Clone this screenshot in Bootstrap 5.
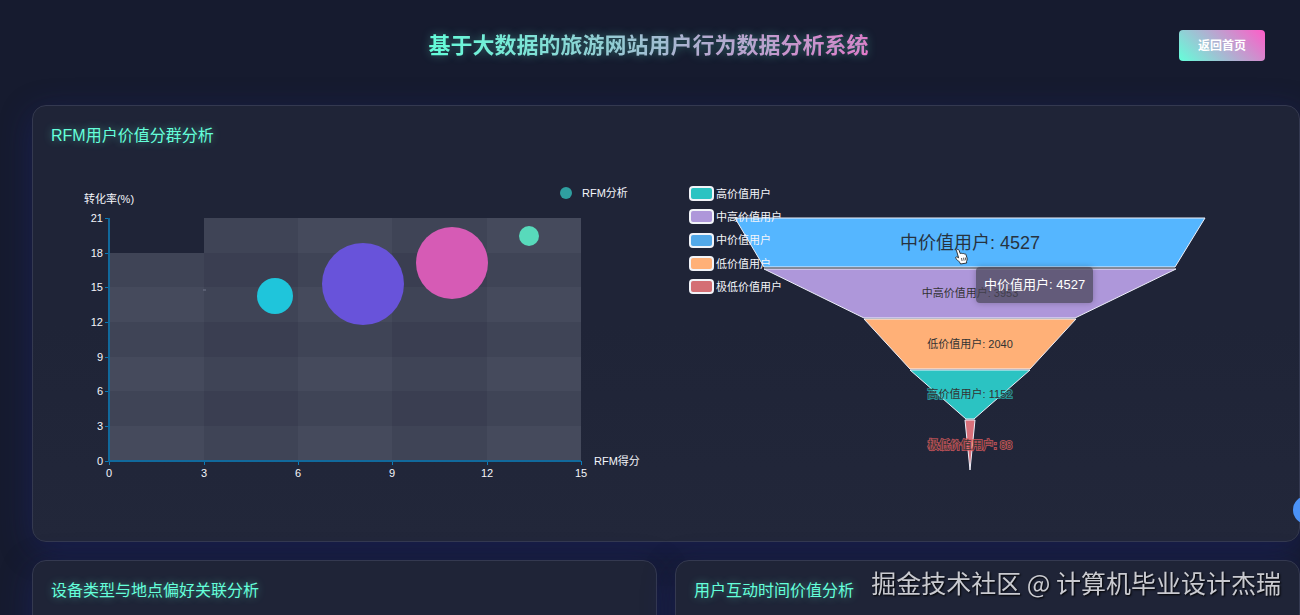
<!DOCTYPE html>
<html lang="zh-CN">
<head>
<meta charset="utf-8">
<meta name="viewport" content="width=device-width, initial-scale=1">
<title>基于大数据的旅游网站用户行为数据分析系统</title>
<link href="https://cdn.jsdelivr.net/npm/bootstrap@5.3.0/dist/css/bootstrap.min.css" rel="stylesheet">
<style>
  body { background: #161b2f; color: #fff; font-family: "Liberation Sans", "Noto Sans CJK SC", sans-serif; }
  .topbar { display: grid; grid-template-columns: 1fr auto 1fr; align-items: center; padding: 30px 35px 44px 32px; }
  .site-title { grid-column: 2; font-size: 22px; line-height: 30px; font-weight: 600; color: transparent;
    background: linear-gradient(90deg, #64ffda, #f06bc8); background-clip: text; -webkit-background-clip: text;
    text-shadow: 0 0 10px rgba(100, 255, 218, .35); }
  .btn-home { justify-self: end; width: 86px; height: 31px; padding: 0; border: 0; border-radius: 4px; font-size: 12px; font-weight: 600;
    color: #fff; background: linear-gradient(45deg, #64ffda, #ff5cc8); }
  .btn-home:hover { color: #fff; }
  .board { padding-left: 32px; gap: 18px; }
  .split { display: grid; grid-template-columns: 1fr 1fr; gap: 18px; }
  .panel { background: #1f2437; border: 1px solid #343950; border-radius: 14px; padding: 18px; box-shadow: 0 8px 32px rgba(31, 38, 135, .37); }
  .panel-tall { background: linear-gradient(#1f2437 50%, #22273a); }
  .panel-low { min-height: 437px; }
  .panel-title { font-size: 16px; line-height: 24px; margin: 0 0 12px; font-weight: 400; color: #64ffda; text-shadow: 0 0 8px rgba(100, 255, 218, .45); }
  .chart { width: 100%; overflow: visible; }
  .chart text { font-size: 11px; fill: #f4f5fa; }
  .chart .name { font-size: 11px; fill: #333; }
  .chart .name-active { font-size: 18px; fill: #27333f; }
  .axis { stroke: #0c7bb8; fill: none; shape-rendering: crispEdges; }
  .axis-line { stroke: #11699c; stroke-width: 2; fill: none; shape-rendering: crispEdges; }
  .tip { left: 301px; top: 107px; padding: 8px; font-size: 13px; line-height: 20px; white-space: nowrap; border-radius: 4px;
    background: rgba(70, 68, 85, .72); box-shadow: 0 0 6px rgba(0, 0, 0, .25); }
  .pointer { left: 280px; top: 88px; }
  .float-dot { right: -21px; top: 496px; width: 28px; height: 28px; background: #4b92f7; border: 0; padding: 0; }
  .credit { right: 19px; bottom: 14px; font-family: "Noto Sans CJK SC", sans-serif; font-size: 25px; line-height: 38px; color: #c9cad0; text-shadow: 1px 1px 2px #000; white-space: nowrap; }
</style>
</head>
<body class="vh-100 overflow-hidden d-flex flex-column">
<header class="topbar flex-shrink-0">
  <h1 class="site-title mb-0">基于大数据的旅游网站用户行为数据分析系统</h1>
  <button type="button" class="btn btn-home">返回首页</button>
</header>

<main class="board d-flex flex-column">
  <section class="panel panel-tall">
    <h2 class="panel-title">RFM用户价值分群分析</h2>
    <div class="split">
      <svg class="chart d-block" viewBox="0 0 606 363" role="img" aria-label="RFM分析">
        <path d="M58 93H153V58H530V301H58Z" fill="#454a5c"/>
        <g fill="#1f2437" fill-opacity=".15">
          <path d="M153 58h94v243h-94zM341 58h95v243h-95z"/>
          <path d="M58 93h472v34H58zM58 162h472v35H58zM58 231h472v35H58z"/>
        </g>
        <path d="M152 130h3" stroke="#73778a"/>
        <path class="axis" d="M54 58h4M54 93h4M54 127h4M54 162h4M54 197h4M54 231h4M54 266h4M54 301h4M58 301v4M153 301v4M247 301v4M341 301v4M436 301v4M530 301v4"/>
        <path class="axis-line" d="M58 58V301H530"/>
        <g text-anchor="end">
          <text x="52" y="62">21</text><text x="52" y="97">18</text><text x="52" y="131">15</text><text x="52" y="166">12</text>
          <text x="52" y="201">9</text><text x="52" y="235">6</text><text x="52" y="270">3</text><text x="52" y="305">0</text>
        </g>
        <g text-anchor="middle">
          <text x="58" y="317">0</text><text x="153" y="317">3</text><text x="247" y="317">6</text>
          <text x="341" y="317">9</text><text x="436" y="317">12</text><text x="530" y="317">15</text>
          <text x="58" y="43">转化率(%)</text>
        </g>
        <text x="543" y="305">RFM得分</text>
        <circle cx="224" cy="136" r="18" fill="#1fc5db"/>
        <circle cx="312" cy="124" r="41" fill="#6853da"/>
        <circle cx="401" cy="103" r="36" fill="#d65bb5"/>
        <circle cx="478" cy="76" r="10" fill="#58dabb"/>
        <circle cx="515" cy="33" r="6" fill="#2f9fa0"/>
        <text x="531" y="37">RFM分析</text>
      </svg>

      <div class="position-relative">
        <svg class="chart d-block" viewBox="0 0 606 363" role="img" aria-label="用户价值漏斗">
          <g stroke="#eef0fa" stroke-width="1">
            <path d="M60 58H530L500 107H89Z" fill="#55b6ff"/>
            <path d="M89 109H501L400 158H189Z" fill="#ae97da"/>
            <path d="M189 159H401L355 209H235Z" fill="#ffb077"/>
            <path d="M235 210H355L299 259H291Z" fill="#2bc3c2"/>
            <path d="M290 260H300L295 310Z" fill="#d9707a"/>
          </g>
          <g text-anchor="middle">
            <text class="name-active" x="295" y="89">中价值用户: 4527</text>
            <text class="name" x="295" y="137">中高价值用户: 3953</text>
            <text class="name" x="295" y="188">低价值用户: 2040</text>
            <text class="name" x="295" y="238" stroke="#2bc3c2" stroke-width="2" stroke-opacity=".7" paint-order="stroke">高价值用户: 1152</text>
            <text class="name" x="295" y="289" stroke="#d9595f" stroke-width="2" stroke-opacity=".8" paint-order="stroke">极低价值用户: 88</text>
          </g>
          <g stroke="#f1f3f8" stroke-width="2">
            <rect x="15" y="27" width="23" height="13" rx="3" fill="#2bc3c2"/>
            <rect x="15" y="50" width="23" height="13" rx="3" fill="#ae97da"/>
            <rect x="15" y="74" width="23" height="13" rx="3" fill="#52a8e8"/>
            <rect x="15" y="97" width="23" height="13" rx="3" fill="#ffb077"/>
            <rect x="15" y="120" width="23" height="13" rx="3" fill="#d46e74"/>
          </g>
          <text x="41" y="38">高价值用户</text>
          <text x="41" y="61">中高价值用户</text>
          <text x="41" y="84">中价值用户</text>
          <text x="41" y="108">低价值用户</text>
          <text x="41" y="131">极低价值用户</text>
        </svg>
        <div class="tip position-absolute" role="tooltip">中价值用户: 4527</div>
        <svg class="pointer position-absolute" width="14" height="17" viewBox="0 0 14 17" aria-hidden="true">
          <path d="M2 1.6c.8-.6 1.7-.2 2 .6l1.3 3.5c.5-.6 1.5-.6 1.9.1.6-.6 1.6-.4 1.9.3.7-.5 1.7-.2 1.9.6l1 3.2c.4 1.600 0 2.600-.5 3.600l.2 1.500-6.200 1-.5-1.400C3.700 13.600 2.900 12.300.8 10.500c-.8-.9.2-2 1.300-1.500l1.500.8L1.600 3c-.2-.6 0-1.100.4-1.400z" fill="#fff" stroke="#222" stroke-width=".9" stroke-linejoin="round"/>
          <path d="M6.500 10l.6 3M8.500 9.700l.6 3M10.300 9.500l.5 2.800" stroke="#333" stroke-width=".8"/>
        </svg>
      </div>
    </div>
  </section>

  <div class="split">
    <section class="panel panel-low"><h2 class="panel-title">设备类型与地点偏好关联分析</h2></section>
    <section class="panel panel-low"><h2 class="panel-title">用户互动时间价值分析</h2></section>
  </div>
</main>

<button type="button" class="float-dot position-fixed rounded-circle" aria-label="工具"></button>
<div class="credit position-fixed">掘金技术社区 @ 计算机毕业设计杰瑞</div>
<script src="https://cdn.jsdelivr.net/npm/bootstrap@5.3.0/dist/js/bootstrap.bundle.min.js"></script>
</body>
</html>
